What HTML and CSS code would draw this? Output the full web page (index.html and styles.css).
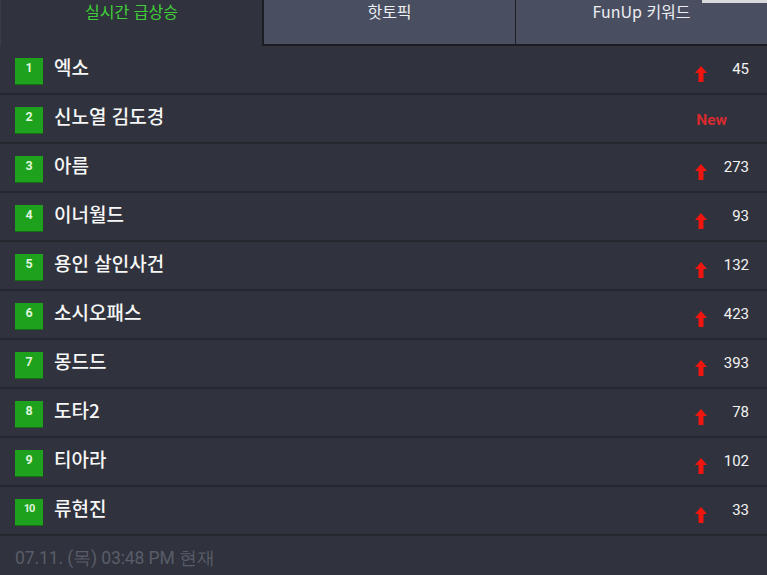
FILE: index.html
```html
<!DOCTYPE html>
<html lang="ko">
<head>
<meta charset="utf-8">
<link rel="stylesheet" href="styles.css">
</head>
<body>
<div class="app">
  <div class="topbar"></div>
  <nav class="tabs">
    <div class="tab active">실시간 급상승</div>
    <div class="tab">핫토픽</div>
    <div class="tab last">FunUp 키워드</div>
  </nav>
  <ul class="list">
    <li class="row"><span class="badge">1</span><span class="kw">엑소</span><span class="chg"><svg class="arrow" viewBox="0 0 12 16"><path d="M6 0 L12 7 L8.5 7 L8.5 16 L3.5 16 L3.5 7 L0 7 Z"/></svg><span class="num">45</span></span></li>
    <li class="row"><span class="badge">2</span><span class="kw">신노열 김도경</span><span class="chg"><span class="new">New</span></span></li>
    <li class="row"><span class="badge">3</span><span class="kw">아름</span><span class="chg"><svg class="arrow" viewBox="0 0 12 16"><path d="M6 0 L12 7 L8.5 7 L8.5 16 L3.5 16 L3.5 7 L0 7 Z"/></svg><span class="num">273</span></span></li>
    <li class="row"><span class="badge">4</span><span class="kw">이너월드</span><span class="chg"><svg class="arrow" viewBox="0 0 12 16"><path d="M6 0 L12 7 L8.5 7 L8.5 16 L3.5 16 L3.5 7 L0 7 Z"/></svg><span class="num">93</span></span></li>
    <li class="row"><span class="badge">5</span><span class="kw">용인 살인사건</span><span class="chg"><svg class="arrow" viewBox="0 0 12 16"><path d="M6 0 L12 7 L8.5 7 L8.5 16 L3.5 16 L3.5 7 L0 7 Z"/></svg><span class="num">132</span></span></li>
    <li class="row"><span class="badge">6</span><span class="kw">소시오패스</span><span class="chg"><svg class="arrow" viewBox="0 0 12 16"><path d="M6 0 L12 7 L8.5 7 L8.5 16 L3.5 16 L3.5 7 L0 7 Z"/></svg><span class="num">423</span></span></li>
    <li class="row"><span class="badge">7</span><span class="kw">몽드드</span><span class="chg"><svg class="arrow" viewBox="0 0 12 16"><path d="M6 0 L12 7 L8.5 7 L8.5 16 L3.5 16 L3.5 7 L0 7 Z"/></svg><span class="num">393</span></span></li>
    <li class="row"><span class="badge">8</span><span class="kw">도타2</span><span class="chg"><svg class="arrow" viewBox="0 0 12 16"><path d="M6 0 L12 7 L8.5 7 L8.5 16 L3.5 16 L3.5 7 L0 7 Z"/></svg><span class="num">78</span></span></li>
    <li class="row"><span class="badge">9</span><span class="kw">티아라</span><span class="chg"><svg class="arrow" viewBox="0 0 12 16"><path d="M6 0 L12 7 L8.5 7 L8.5 16 L3.5 16 L3.5 7 L0 7 Z"/></svg><span class="num">102</span></span></li>
    <li class="row"><span class="badge small">10</span><span class="kw">류현진</span><span class="chg"><svg class="arrow" viewBox="0 0 12 16"><path d="M6 0 L12 7 L8.5 7 L8.5 16 L3.5 16 L3.5 7 L0 7 Z"/></svg><span class="num">33</span></span></li>
  </ul>
  <footer class="foot">07.11. (목) 03:48 PM 현재</footer>
</div>
</body>
</html>
```

FILE: styles.css
```css
* { box-sizing: border-box; margin: 0; padding: 0; }
html, body { background: #30333d; }
body {
  width: 767px;
  height: 575px;
  overflow: hidden;
  font-family: "Noto Sans CJK KR", Roboto, sans-serif;
  color: #f2f2f2;
}
.app { position: relative; width: 767px; height: 575px; }
.topbar {
  position: absolute;
  top: 0;
  right: 0;
  width: 65px;
  height: 3px;
  background: #d9d9dc;
}
.tabs { display: flex; height: 46px; }
.tab {
  display: flex;
  justify-content: center;
  padding-top: 0;
  font-size: 16px;
  font-weight: 400;
  line-height: 22px;
  color: #eceef2;
  background: #4a4e61;
  border-bottom: 2px solid #1c1e24;
}
.tab:nth-child(2) { width: 254px; border-left: 2px solid #1c1e24; border-right: 1px solid #1c1e24; }
.tab.last { flex: 1; }
.tab.active {
  width: 262px;
  color: #3fcf36;
  background: #30333d;
  border-bottom: none;
  border-left: 1px solid #3a3d48;
}
.list { list-style: none; }
.row {
  display: flex;
  align-items: center;
  height: 49px;
  padding: 0 18px 6px 15px;
  border-bottom: 2px solid #262830;
}
.badge {
  width: 28px;
  height: 26px;
  margin-top: 8px;
  background: #1ea11c;
  box-shadow: 0 1px 0 #156d14;
  color: #dff5dc;
  font-family: Roboto, sans-serif;
  font-weight: 700;
  font-size: 12.5px;
  line-height: 19px;
  text-align: center;
}
.badge.small { font-size: 11px; letter-spacing: -1px; }
.kw {
  margin-left: 11px;
  font-size: 19px;
  font-weight: 500;
  line-height: 26px;
  color: #f7f7f7;
  flex: 1;
}
.chg { display: flex; align-items: center; }
.arrow {
  width: 12px;
  height: 16px;
  margin-top: 14px;
  fill: #f0160f;
}
.num {
  width: 42px;
  margin-top: 4px;
  text-align: right;
  font-family: Roboto, sans-serif;
  font-size: 15px;
  color: #f4f4f4;
}
.new {
  margin-right: 22px;
  margin-top: 8px;
  font-family: Roboto, sans-serif;
  font-weight: 700;
  font-size: 15.5px;
  color: #d72a2e;
}
.foot {
  padding: 10px 15px;
  font-family: Roboto, sans-serif;
  font-size: 17.5px;
  color: #595d69;
  letter-spacing: -0.1px;
}
```
